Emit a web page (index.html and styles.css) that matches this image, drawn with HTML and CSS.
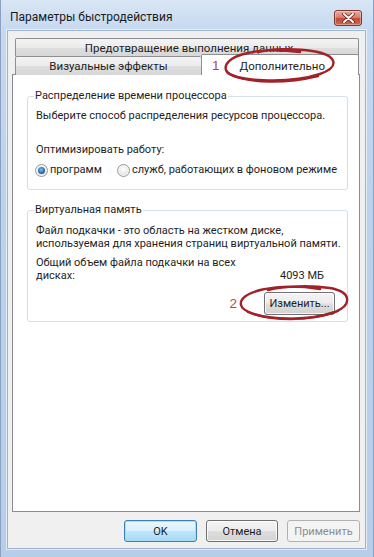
FILE: index.html
```html
<!DOCTYPE html>
<html lang="ru">
<head>
<meta charset="utf-8">
<title>Параметры быстродействия</title>
<link rel="stylesheet" href="styles.css">
</head>
<body>
<div class="window">
  <div class="titlebar">
    <span class="title">Параметры быстродействия</span>
    <div class="close">
      <svg width="13" height="10" viewBox="0 0 13 10"><path d="M2 1 L11 9 M11 1 L2 9" stroke="#5a1a14" stroke-width="3.4" stroke-linecap="round"/><path d="M2 1 L11 9 M11 1 L2 9" stroke="#ffffff" stroke-width="2" stroke-linecap="round"/></svg>
    </div>
  </div>
  <div class="client">
    <div class="tabs">
      <div class="tabrow">
        <div class="tab tab-wide">Предотвращение выполнения данных</div>
      </div>
      <div class="tabrow">
        <div class="tab tab-visual">Визуальные эффекты</div>
        <div class="tab tab-active"><span class="mark">1</span><span class="tab-label">Дополнительно</span></div>
      </div>
    </div>
    <div class="panel">
      <fieldset class="group group-cpu">
        <legend>Распределение времени процессора</legend>
        <p class="line nowrap">Выберите способ распределения ресурсов процессора.</p>
        <p class="line optimize">Оптимизировать работу:</p>
        <div class="radios">
          <label class="radio"><span class="dot checked"></span>программ</label>
          <label class="radio"><span class="dot"></span>служб, работающих в фоновом режиме</label>
        </div>
      </fieldset>
      <fieldset class="group group-vm">
        <legend>Виртуальная память</legend>
        <p class="line nowrap">Файл подкачки - это область на жестком диске,<br>используемая для хранения страниц виртуальной памяти.</p>
        <div class="total">
          <p class="line nowrap">Общий объем файла подкачки на всех<br>дисках:</p>
          <span class="value">4093 МБ</span>
        </div>
        <div class="change-row">
          <span class="mark">2</span>
          <button class="btn btn-change">Изменить...</button>
        </div>
      </fieldset>
    </div>
    <div class="buttons">
      <button class="btn btn-default">OK</button>
      <button class="btn">Отмена</button>
      <button class="btn btn-disabled">Применить</button>
    </div>
  </div>
  <svg class="annot" width="374" height="557" viewBox="0 0 374 557">
    <g fill="none" stroke="#a3222a" stroke-width="2.4" stroke-linecap="round">
      <path d="M300 52 C 250 46, 222 58, 226 70 C 230 82, 290 84, 320 74 C 340 67, 338 55, 312 51 C 295 48, 270 49, 258 52"/>
      <path d="M232 75 C 250 83, 285 84, 318 76"/>
      <path d="M320 289 C 275 282, 238 292, 241 305 C 244 318, 300 324, 335 312 C 352 305, 352 292, 330 288 C 310 285, 285 286, 268 290"/>
      <path d="M248 312 C 270 321, 310 322, 338 311"/>
    </g>
  </svg>
</div>
</body>
</html>
```

FILE: styles.css
```css
* { box-sizing: border-box; }
html, body { margin: 0; padding: 0; }
body {
  width: 374px;
  height: 557px;
  overflow: hidden;
  font-family: Roboto, "Liberation Sans", sans-serif;
  font-size: 11px;
  color: #1e1e1e;
}
.window {
  position: relative;
  width: 374px;
  height: 557px;
  display: flex;
  flex-direction: column;
  background: linear-gradient(to bottom, #d9e6f5 0px, #c6d9f0 30px, #bcd1ec 200px, #b7cde9 557px);
  border-left: 1px solid #8aa2c0;
  border-right: 1px solid #7fa4c7;
}
.titlebar {
  height: 30px;
  display: flex;
  align-items: center;
  justify-content: space-between;
  padding: 0 11px 0 9px;
}
.title {
  font-size: 12px;
  color: #1b1b1b;
  margin-top: 3px;
}
.close {
  width: 28px;
  height: 16px;
  margin-top: 5px;
  border: 1px solid #7a3a33;
  border-radius: 3px;
  background: linear-gradient(to bottom, #e9a99d 0%, #d9806f 45%, #c44a36 55%, #cf6a4f 100%);
  display: flex;
  align-items: center;
  justify-content: center;
  box-shadow: inset 0 0 0 1px rgba(255,255,255,0.35);
}
.client {
  flex: 1;
  margin: 0 7px 8px 6px;
  background: #f0f0f0;
  border: 1px solid #9fb3cc;
  padding: 7px 5px 6px 4px;
  display: flex;
  flex-direction: column;
  box-shadow: 0 0 0 1px rgba(255,255,255,0.6);
}
.tabs {
  padding: 0 1px 0 3px;
  display: flex;
  flex-direction: column;
  margin-bottom: -1px;
  position: relative;
  z-index: 1;
}
.tabrow {
  display: flex;
}
.tab {
  height: 19px;
  border: 1px solid #8c8e94;
  border-bottom: none;
  border-radius: 2px 2px 0 0;
  background: linear-gradient(to bottom, #f4f4f4 0%, #ebebeb 50%, #dedede 51%, #d7d7d7 100%);
  display: flex;
  align-items: center;
  justify-content: center;
  font-size: 11.5px;
  color: #1e1e1e;
  white-space: nowrap;
}
.tab-wide {
  flex: 1;
  height: 18px;
  padding-left: 4px;
}
.tab-visual {
  width: 186px;
  border-right: none;
  height: 19px;
}
.tab-active {
  flex: 1;
  height: 21px;
  margin-top: -2px;
  background: #ffffff;
  justify-content: flex-start;
  padding-left: 10px;
  gap: 20px;
  border-color: #8c8e94;
}
.mark {
  color: #b5474b;
  font-size: 13.5px;
  font-family: "Liberation Sans", sans-serif;
}
.tab-label {
  margin-top: 1px;
}
.panel {
  height: 438px;
  background: #ffffff;
  border: 1px solid #898c95;
  padding: 14px 11px 0 14px;
}
.group {
  margin: 0;
  border: 1px solid #d5dfe5;
  border-radius: 3px;
  padding: 0 12px 0 8px;
  min-width: 0;
}
.group legend {
  padding: 0 1px;
  margin-left: -2px;
  line-height: 14px;
  font-size: 11px;
}
.line {
  margin: 0;
  line-height: 13px;
}
.nowrap { white-space: nowrap; }
.group-cpu {
  padding-top: 6px;
  padding-bottom: 12px;
}
.optimize {
  margin-top: 21px;
}
.radios {
  margin-top: 7px;
  display: flex;
  gap: 16px;
  line-height: 14px;
  white-space: nowrap;
}
.radio {
  display: flex;
  align-items: center;
  gap: 2px;
  margin-left: -1px;
}
.dot {
  width: 13px;
  height: 13px;
  flex: none;
  border-radius: 50%;
  border: 1px solid #8f9aa5;
  background: radial-gradient(circle at 50% 40%, #ffffff 0%, #e6e6e6 60%, #cfcfcf 100%);
  display: flex;
  align-items: center;
  justify-content: center;
  box-shadow: inset 0 0 0 1px #f6f6f6;
}
.dot.checked::after {
  content: "";
  width: 7px;
  height: 7px;
  border-radius: 50%;
  background: radial-gradient(circle at 45% 40%, #7fc0ee 0%, #2c6fb0 55%, #123a66 100%);
}
.group-vm {
  margin-top: 13px;
  padding-top: 7px;
  padding-bottom: 6px;
}
.total {
  margin-top: 6px;
  display: flex;
  justify-content: space-between;
  align-items: flex-end;
}
.value {
  line-height: 13px;
  margin-right: 11px;
}
.change-row {
  margin-top: 10px;
  display: flex;
  justify-content: flex-end;
  align-items: center;
  gap: 27px;
}
.btn {
  height: 22px;
  width: 72px;
  padding: 0;
  border: 1px solid #707070;
  border-radius: 3px;
  background: linear-gradient(to bottom, #f4f4f4 0%, #ececec 48%, #dedede 52%, #d2d2d2 100%);
  font-family: Roboto, "Liberation Sans", sans-serif;
  font-size: 11px;
  color: #1e1e1e;
  box-shadow: inset 0 0 0 1px rgba(255,255,255,0.8);
}
.btn-change {
  width: 71px;
  height: 23px;
}
.buttons {
  margin-top: 8px;
  display: flex;
  justify-content: flex-end;
  gap: 9px;
  padding-right: 0;
}
.btn-default {
  width: 73px;
  border-color: #3c7fb1;
  background: linear-gradient(to bottom, #eaf6fd 0%, #d9f0fc 48%, #bee6fd 52%, #a7d9f5 100%);
  box-shadow: inset 0 0 0 1px #a9dcf5;
}
.btn-disabled {
  width: 73px;
  border-color: #adb2b5;
  background: #f4f4f4;
  color: #8d8d8d;
  box-shadow: none;
}
.annot {
  position: absolute;
  left: -1px;
  top: 0;
  z-index: 5;
  pointer-events: none;
}
```
